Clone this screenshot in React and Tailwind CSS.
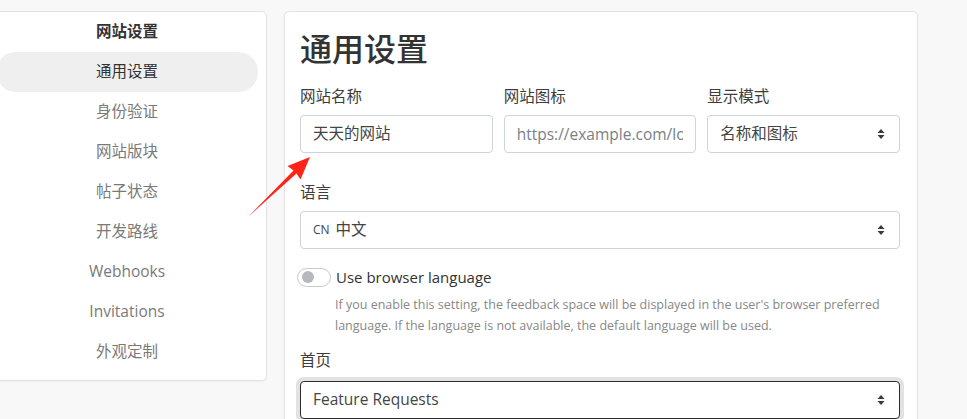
import React from "react";

const FONT = { fontFamily: '"Open Sans", "Noto Sans CJK SC", sans-serif' };

function Chevrons() {
  return (
    <svg width="8" height="12" viewBox="0 0 8 12" className="shrink-0">
      <path d="M4 1 L7.5 5 L0.5 5 Z" fill="#343a40" />
      <path d="M4 11 L7.5 7 L0.5 7 Z" fill="#343a40" />
    </svg>
  );
}

function Select({ children, focused }) {
  return (
    <div
      className={
        "flex h-[38px] items-center justify-between rounded-[4px] border bg-white pl-3 pr-[14px] text-[15.5px] text-[#444] " +
        (focused
          ? "border-[#2b2b2b] shadow-[0_0_0_4px_#e2e2e2]"
          : "border-[#ced4da]")
      }
    >
      <div className="flex items-center gap-1 whitespace-nowrap">{children}</div>
      <Chevrons />
    </div>
  );
}

function Label({ children, mb = "mb-[7px]" }) {
  return <div className={"h-6 text-[15.5px] leading-6 text-[#3d3d3d] " + mb}>{children}</div>;
}

const navItems = [
  { t: "网站设置", bold: true },
  { t: "通用设置", active: true },
  { t: "身份验证" },
  { t: "网站版块" },
  { t: "帖子状态" },
  { t: "开发路线" },
  { t: "Webhooks" },
  { t: "Invitations" },
  { t: "外观定制" },
];

export default function App() {
  return (
    <div
      className="relative h-[419px] w-[967px] overflow-hidden bg-[#f8f8f8]"
      style={FONT}
    >
      <div className="flex items-start gap-[17px] pt-[11px]">
        {/* Sidebar */}
        <div className="ml-[-13px] w-[280px] shrink-0 rounded-[5px] border border-[#e2e2e2] bg-white pb-2 shadow-[0_1px_2px_rgba(0,0,0,0.04)]">
          {navItems.map((it) => (
            <div
              key={it.t}
              className={
                "mx-2 flex h-10 items-center justify-center rounded-full text-[15.5px] " +
                (it.active
                  ? "bg-[#efefef] text-[#333]"
                  : it.bold
                  ? "font-semibold text-[#333]"
                  : "text-[#7a7a7a]")
              }
            >
              {it.t}
            </div>
          ))}
        </div>

        {/* Main card */}
        <div className="w-[634px] shrink-0 rounded-[5px] border border-[#e2e2e2] bg-white pb-10 pl-[15px] pr-[17px] pt-[17px] shadow-[0_1px_2px_rgba(0,0,0,0.04)]">
          <h1 className="h-[40px] text-[32px] font-medium leading-[40px] text-[#333]">通用设置</h1>

          <div className="mt-[15px] grid grid-cols-3 gap-[11px]">
            <div>
              <Label>网站名称</Label>
              <div className="flex h-[38px] items-center rounded-[4px] border border-[#ced4da] px-3 text-[15.5px] text-[#444]">
                天天的网站
              </div>
            </div>
            <div className="min-w-0">
              <Label>网站图标</Label>
              <input
                readOnly
                placeholder="https://example.com/logo.png"
                className="block h-[38px] w-full min-w-0 rounded-[4px] border border-[#ced4da] bg-white px-3 text-[15.5px] text-[#444] outline-none placeholder:text-[#7a7f85]"
                style={FONT}
              />
            </div>
            <div>
              <Label>显示模式</Label>
              <Select>名称和图标</Select>
            </div>
          </div>

          <div className="mt-[27px]">
            <Label>语言</Label>
            <Select>
              <span className="mr-[2px] text-[12px] text-[#444]">CN</span>
              <span>中文</span>
            </Select>
          </div>

          <div className="mt-[17px] flex items-center">
            <div className="ml-[-3px] flex h-[19px] w-[34px] items-center rounded-full border border-[#c9c9c9] bg-white pl-[4px]">
              <div className="h-[12px] w-[12px] rounded-full bg-[#b5b8bc]" />
            </div>
            <span className="ml-[5px] text-[15px] text-[#333]">Use browser language</span>
          </div>
          <p className="ml-[35px] mt-[5px] text-[12.5px] leading-[21px] text-[#888]">
            If you enable this setting, the feedback space will be displayed in the user's browser preferred language. If the language is not available, the default language will be used.
          </p>

          <div className="mt-[12px]">
            <Label mb="mb-[9px]">首页</Label>
            <Select focused>Feature Requests</Select>
          </div>
        </div>
      </div>

      {/* Annotation arrow */}
      <svg
        className="pointer-events-none absolute left-0 top-0"
        width="967"
        height="419"
        viewBox="0 0 967 419"
      >
        <polygon
          points="310,157 287.5,166 293.5,170.5 248,217 296.5,173.5 300.5,179.5"
          fill="#ff2418"
        />
      </svg>
    </div>
  );
}
